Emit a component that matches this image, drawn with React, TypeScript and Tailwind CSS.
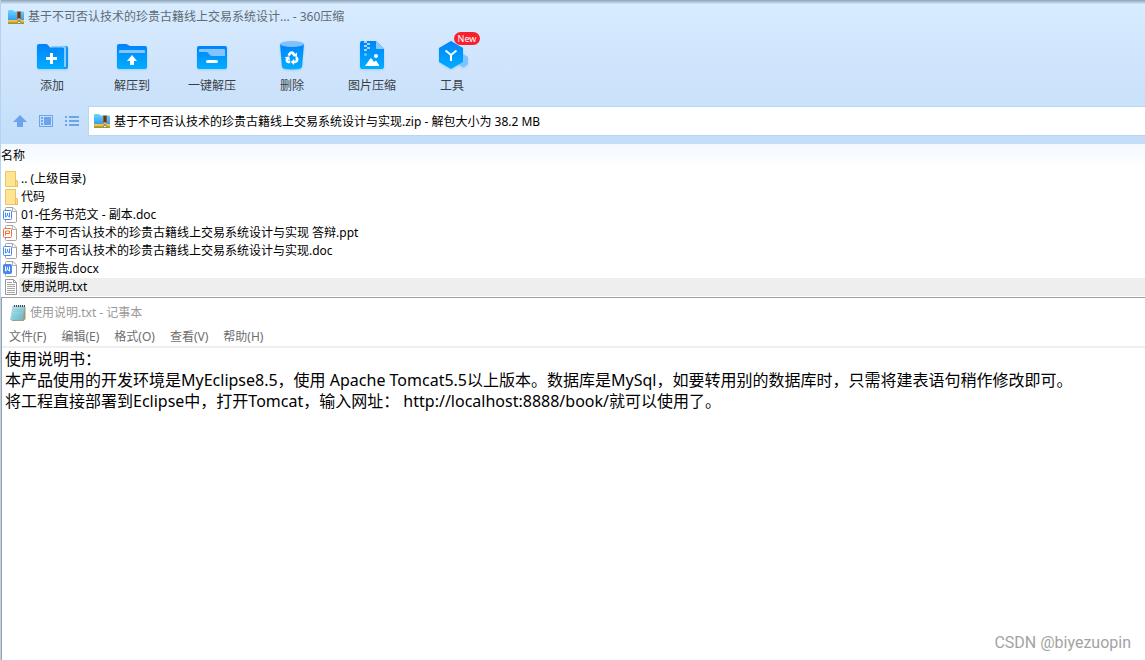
import React from "react";

const ZipIcon = () => (
  <svg width="16" height="14" viewBox="0 0 16 14" className="shrink-0" aria-hidden="true">
    <defs>
      <linearGradient id="zipBlue" x1="0" y1="0" x2="0" y2="1">
        <stop offset="0" stopColor="#6fd3fb" />
        <stop offset="1" stopColor="#2b9cf0" />
      </linearGradient>
    </defs>
    <path d="M0 1Q0 0 1 0H5L6.500 1.500H15Q16 1.500 16 2.500V11H0Z" fill="url(#zipBlue)" />
    <rect y="10" width="16" height="1.500" fill="#fbc62d" />
    <rect y="11.500" width="16" height="1.500" fill="#f58a1c" />
    <rect y="13" width="16" height="1" fill="#5db54a" />
    <rect x="9" y="1.500" width="4" height="11.500" fill="#a0561e" />
    <path d="M11 2V9" stroke="#4a2a18" strokeWidth="1.400" />
    <rect x="9.500" y="8.500" width="3" height="4.500" rx="1" fill="#fff1c4" />
    <rect x="10.500" y="9.500" width="1" height="2.500" fill="#4a2a18" />
  </svg>
);

const Blue = ({ id }: { id: string }) => (
  <defs>
    <linearGradient id={id} x1="0" y1="0" x2="0" y2="1">
      <stop offset="0" stopColor="#0083fb" />
      <stop offset="1" stopColor="#00aeff" />
    </linearGradient>
  </defs>
);

const iconClass = "h-8 w-8 overflow-visible drop-shadow-[0_1px_1px_#a5cdf5]";

const AddIcon = () => (
  <svg viewBox="0 0 32 32" className={iconClass} aria-hidden="true">
    <Blue id="gAdd" />
    <path d="M17 6H30Q32 6 32 8V27Q32 29 30 29H17Z" fill="#0d94fd" />
    <path d="M15 6H28.500Q30 6 30 7.500V27H28V8H17Z" fill="#8dcbff" />
    <path d="M1 6Q1 4 3 4H10Q11 4 12 5L14 7.500H26.500Q28 7.500 28 9V29H3Q1 29 1 27Z" fill="url(#gAdd)" />
    <path d="M15.500 13V24M10 18.500H21" stroke="#fff" strokeWidth="3" />
  </svg>
);

const ExtractIcon = () => (
  <svg viewBox="0 0 32 32" className={iconClass} aria-hidden="true">
    <Blue id="gExt" />
    <path d="M1 6Q1 4 3 4H10Q11 4 12 5L14 6H29Q31 6 31 8V27Q31 29 29 29H3Q1 29 1 27Z" fill="url(#gExt)" />
    <path d="M3 13V11Q3 10 4 10H28Q29 10 29 11V13Z" fill="#84c4ff" />
    <path d="M16 15L21 21H18V25H14V21H11Z" fill="#fff" />
  </svg>
);

const QuickIcon = () => (
  <svg viewBox="0 0 32 32" className={iconClass} aria-hidden="true">
    <Blue id="gQuick" />
    <rect x="1" y="6" width="30" height="23" rx="2" fill="url(#gQuick)" />
    <path d="M3 10Q3 9 4 9H28Q29 9 29 10V16H16Q14 16 13 14Q12 12 10 12H3Z" fill="#82c4ff" />
    <rect x="10" y="20" width="12" height="3" rx="1.500" fill="#fff" />
  </svg>
);

const DeleteIcon = () => (
  <svg viewBox="0 0 32 32" className={iconClass} aria-hidden="true">
    <Blue id="gDel" />
    <path d="M4 4H28L26 27Q25.500 29.500 16 29.500Q6.500 29.500 6 27Z" fill="url(#gDel)" />
    <ellipse cx="16" cy="4" rx="12" ry="3" fill="#80c2ff" />
    <g fill="none" stroke="#fff" strokeWidth="2.600">
      <path d="M12.600 15.600L14 13.400Q15 12.400 16.600 12.700L18.400 15" />
      <path d="M20.300 17.200L21.200 19.200Q21.400 21.500 19 21.900H17.500" />
      <path d="M14.300 21.900H12.500Q10 21.500 11.100 18.800" />
    </g>
    <path d="M21 12.500V17L16.500 16ZM18 19V25L14.900 22ZM8.500 17.500L13.200 16.200L14 20.500Z" fill="#fff" />
  </svg>
);

const ImageIcon = () => (
  <svg viewBox="0 0 32 32" className={iconClass} aria-hidden="true">
    <Blue id="gImg" />
    <path d="M4 3Q4 1 6 1H20L28 9V27Q28 29 26 29H6Q4 29 4 27Z" fill="url(#gImg)" />
    <path d="M20 1L28 9H21Q20 9 20 8Z" fill="#8bcaff" />
    <path d="M8 1H11V3H14V5H11V7H14V9H11V11H8V9H11V7H8V5H11V3H8Z" fill="#a5d4ff" />
    <circle cx="9.500" cy="14.500" r="1.500" fill="#77bfff" />
    <circle cx="20" cy="16" r="2" fill="#fff" />
    <path d="M9 26L14 19Q15 17.500 16 19L18 22L20 20.500L23 25V26Z" fill="#fff" />
  </svg>
);

const ToolIcon = () => (
  <svg viewBox="0 0 32 32" className={iconClass} aria-hidden="true">
    <Blue id="gTool" />
    <path d="M27 14L32 17V24L27.500 27.500L22 24V20Z" fill="#80c1ff" />
    <path d="M15 1L27 8V22L15 29L3 22V8Z" fill="url(#gTool)" />
    <path d="M9.500 10.500L15 15L20.500 10.500M15 15V21" fill="none" stroke="#fff" strokeWidth="2" />
  </svg>
);

const tools = [
  { label: "添加", Icon: AddIcon },
  { label: "解压到", Icon: ExtractIcon },
  { label: "一键解压", Icon: QuickIcon },
  { label: "删除", Icon: DeleteIcon },
  { label: "图片压缩", Icon: ImageIcon },
  { label: "工具", Icon: ToolIcon, badge: "New" },
];

const FolderIcon = () => (
  <svg width="16" height="18" viewBox="0 0 16 18" className="shrink-0" aria-hidden="true">
    <path d="M2.500 1.500H12.500V10.500L14.500 11V16.500H2.500Z" fill="#ffe496" stroke="#e9c75f" />
    <path d="M12.500 16V10.500L14.500 11V16.500Z" fill="#ffe08a" stroke="#e0b94c" strokeWidth=".7" />
  </svg>
);

const DocIcon = ({ kind }: { kind: string }) => {
  const color = kind === "ppt" ? "#f0703f" : "#4489ee";
  const solid = kind === "docx";
  return (
    <svg width="16" height="18" viewBox="0 0 16 18" className="shrink-0" aria-hidden="true">
      <path d="M2.500 3V2.500Q2.500 1.500 3.500 1.500H10L13.500 5V15.500Q13.500 16.500 12.500 16.500H3.500Q2.500 16.500 2.500 15.500V3" fill="#fff" stroke="#a3a3a3" />
      <path d="M9.500 1.500V5.500H13.500" fill="none" stroke="#b0b0b0" />
      <rect x=".5" y="4.500" width="8" height="9" rx="1" fill={solid ? color : "#fff"} stroke={color} />
      {kind === "ppt" ? (
        <path d="M2.500 11.500V7H6.500V9.500H3" fill="none" stroke={color} />
      ) : (
        <path d="M2.500 6.500V11L4.500 9.500L6.500 11V6.500M4.500 7V9.500" fill="none" stroke={solid ? "#fff" : color} />
      )}
    </svg>
  );
};

const TextIcon = () => (
  <svg width="16" height="18" viewBox="0 0 16 18" className="shrink-0" aria-hidden="true">
    <path d="M2.500 1.500H10.500L13.500 4.500V16.500H2.500Z" fill="#fff" stroke="#999" />
    <path d="M4 4.500H9M4 6.500H12M4 8.500H12M4 10.500H12M4 12.500H12M4 14.500H12" stroke="#a8a8a8" />
    <path d="M10.500 1.500V4.500H13.500" fill="none" stroke="#999" />
  </svg>
);

const files = [
  { name: ".. (上级目录)", kind: "folder" },
  { name: "代码", kind: "folder" },
  { name: "01-任务书范文 - 副本.doc", kind: "doc" },
  { name: "基于不可否认技术的珍贵古籍线上交易系统设计与实现 答辩.ppt", kind: "ppt" },
  { name: "基于不可否认技术的珍贵古籍线上交易系统设计与实现.doc", kind: "doc" },
  { name: "开题报告.docx", kind: "docx" },
  { name: "使用说明.txt", kind: "txt", selected: true },
];

const FileIcon = ({ kind }: { kind: string }) =>
  kind === "folder" ? <FolderIcon /> : kind === "txt" ? <TextIcon /> : <DocIcon kind={kind} />;

const NotepadIcon = () => (
  <svg width="16" height="18" viewBox="0 0 16 18" className="shrink-0" aria-hidden="true">
    <defs>
      <linearGradient id="note" x1="0" y1="0" x2="1" y2="1">
        <stop offset="0" stopColor="#c9edf4" />
        <stop offset="1" stopColor="#58b3c6" />
      </linearGradient>
    </defs>
    <path d="M4 3H15.500V15L13.500 17H2Z" fill="#a8946c" />
    <path d="M3 2H14.500L12.500 16H.5Z" fill="url(#note)" stroke="#8cc0ca" strokeWidth=".6" />
    <path d="M3 5.500H13M3 7.500H13M2.500 9.500H12.500M2.500 11.500H12.500M2 13.500H12" stroke="#7cc1cf" strokeWidth=".5" />
    <path d="M4 2H15" stroke="#3f4f52" strokeWidth="2" strokeDasharray="1 1" />
  </svg>
);

const menus = ["文件(F)", "编辑(E)", "格式(O)", "查看(V)", "帮助(H)"];

export default function App() {
  return (
    <div className="relative flex min-h-screen flex-col overflow-hidden border-l border-[#b5d2f0] bg-white font-['Noto_Sans','Noto_Sans_CJK_SC',sans-serif] text-xs text-black">
      <header className="bg-linear-to-b from-[#d7ecff] via-[#cfe4fc] to-[#c3def9]">
        <div className="h-1 bg-linear-to-b from-[#8fa3b8] to-[#d3e6f8]" />
        <h1 className="flex h-[26px] items-center gap-1 pl-[7px] text-[#626a73]">
          <ZipIcon />
          基于不可否认技术的珍贵古籍线上交易系统设计... - 360压缩
        </h1>
        <nav className="flex h-[76px] pt-[10px] pl-[11px]">
          {tools.map(({ label, Icon, badge }) => (
            <button key={label} type="button" className="relative flex w-20 flex-col items-center text-[#3b3f45]">
              <Icon />
              <span className="pt-1 leading-5">{label}</span>
              {badge && (
                <span className="absolute -top-2 left-[42px] flex h-[13px] w-[26px] items-center justify-center rounded-full bg-[#f8202d] text-[9px] text-white">
                  {badge}
                </span>
              )}
            </button>
          ))}
        </nav>
        <div className="flex items-center pb-2">
          <div className="flex w-[87px] items-center gap-3 pl-3 text-[#6ba3ec]">
            <button type="button" aria-label="向上">
              <svg width="14" height="14" viewBox="0 0 14 14"><path d="M7 1L14 8H10V13H4V8H0Z" fill="currentColor" /></svg>
            </button>
            <button type="button" aria-label="预览">
              <svg width="14" height="14" viewBox="0 0 14 14">
                <rect x=".5" y="1.500" width="13" height="11" fill="none" stroke="currentColor" />
                <path d="M2 3H4V5H2ZM2 6H4V8H2ZM2 9H4V11H2ZM5 3H12V11H5Z" fill="currentColor" />
              </svg>
            </button>
            <button type="button" aria-label="列表">
              <svg width="14" height="14" viewBox="0 0 14 14">
                <path d="M0 3H2M4 3H14M0 7H2M4 7H14M0 11H2M4 11H14" stroke="currentColor" strokeWidth="2" />
              </svg>
            </button>
          </div>
          <div className="flex h-[30px] flex-1 items-center gap-1 border border-r-0 border-[#b9d6f3] bg-white pl-[5px]">
            <ZipIcon />
            <span className="pt-px">基于不可否认技术的珍贵古籍线上交易系统设计与实现.zip - 解包大小为 38.2 MB</span>
          </div>
        </div>
      </header>

      <table className="w-full">
        <thead>
          <tr>
            <th className="h-[26px] bg-linear-to-b from-[#f3f9ff] to-white pb-[2px] text-left font-normal">名称</th>
          </tr>
        </thead>
        <tbody>
          {files.map((file) => (
            <tr key={file.name}>
              <td className="p-0 pl-[2px]">
                <div className="flex h-[18px] items-center">
                  <FileIcon kind={file.kind} />
                  <span className={file.selected ? "flex h-full flex-1 items-center bg-[#eeeeee] pl-[2px]" : "pl-[2px]"}>{file.name}</span>
                </div>
              </td>
            </tr>
          ))}
        </tbody>
      </table>

      <section className="mt-px flex flex-1 flex-col border-t border-l border-[#a0a0a0]">
        <h2 className="flex h-[30px] items-center gap-1 pl-2 text-[#999999]">
          <NotepadIcon />
          使用说明.txt - 记事本
        </h2>
        <div className="flex h-5 items-center gap-[15px] border-b-2 border-[#f0f0f0] pl-[7px] text-[#6d6d6d]">
          {menus.map((menu) => (
            <button key={menu} type="button">{menu}</button>
          ))}
        </div>
        <div className="pt-px pl-[3px] text-base leading-[21px]">
          <p>使用说明书：</p>
          <p>本产品使用的开发环境是MyEclipse8.5，使用 Apache Tomcat5.5以上版本。数据库是MySql，如要转用别的数据库时，只需将建表语句稍作修改即可。</p>
          <p>将工程直接部署到Eclipse中，打开Tomcat，输入网址： http://localhost:8888/book/就可以使用了。</p>
        </div>
      </section>
      <div className="absolute right-[14px] bottom-[7px] font-[Roboto,sans-serif] text-base leading-5 text-[#a3a3a3]">CSDN @biyezuopin</div>
    </div>
  );
}
